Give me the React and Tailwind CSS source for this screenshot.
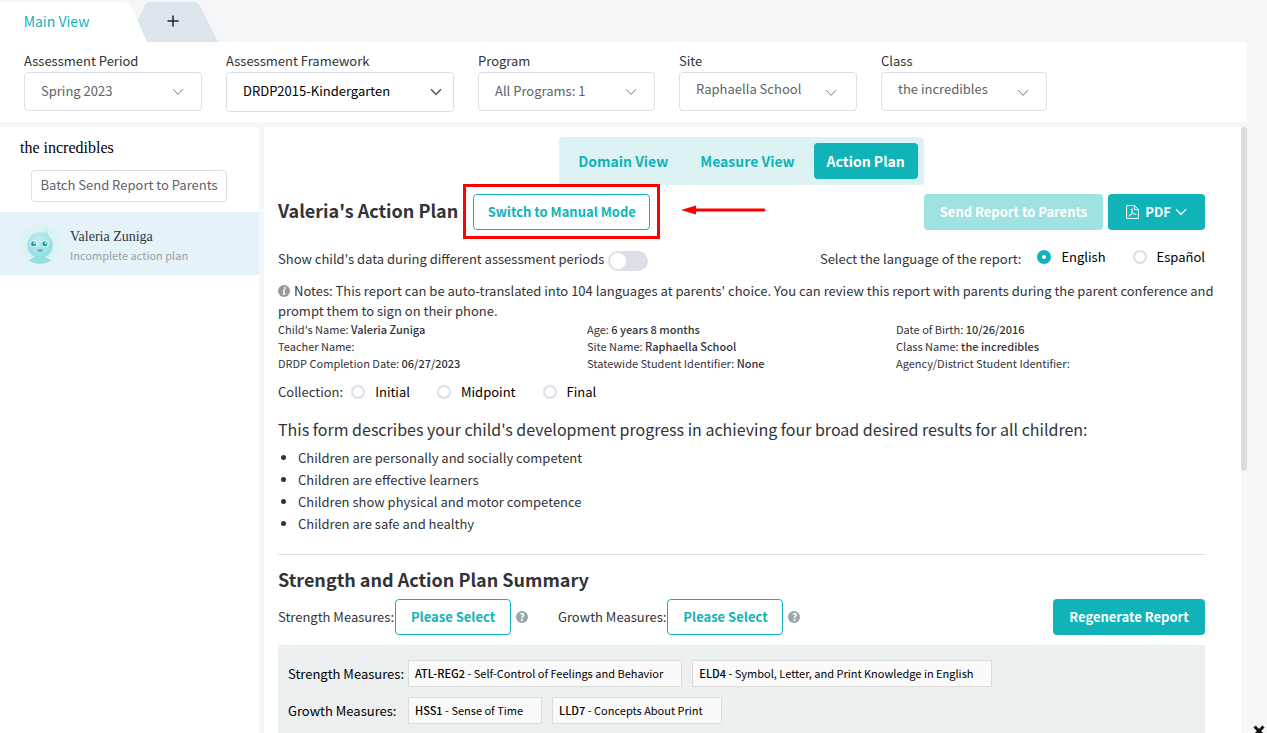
import React, { useState } from "react";

const measures = {
  strength: [
    { code: "ATL-REG2", name: "Self-Control of Feelings and Behavior" },
    { code: "ELD4", name: "Symbol, Letter, and Print Knowledge in English" },
  ],
  growth: [
    { code: "HSS1", name: "Sense of Time" },
    { code: "LLD7", name: "Concepts About Print" },
  ],
};

const childInfo = [
  ["Child's Name:", "Valeria Zuniga"],
  ["Age:", "6 years 8 months"],
  ["Date of Birth:", "10/26/2016"],
  ["Teacher Name:", ""],
  ["Site Name:", "Raphaella School"],
  ["Class Name:", "the incredibles"],
  ["DRDP Completion Date:", "06/27/2023"],
  ["Statewide Student Identifier:", "None"],
  ["Agency/District Student Identifier:", ""],
];

const results = [
  "Children are personally and socially competent",
  "Children are effective learners",
  "Children show physical and motor competence",
  "Children are safe and healthy",
];

function Chevron({ className, width = 1 }) {
  return (
    <svg viewBox="0 0 12 8" className={className} fill="none" stroke="currentColor" strokeWidth={width} aria-hidden="true">
      <path d="M1 1.2 6 6.4 11 1.2" />
    </svg>
  );
}

function Filter({ id, label, value, wrap, field = "h-[39px] text-[#606266] pb-0.5", icon = "text-[#6f7785] right-[18px] top-4", stroke }) {
  return (
    <div className={wrap}>
      <label htmlFor={id} className="mb-px block leading-5 text-[#323338]">{label}</label>
      <div className="relative">
        <select id={id} className={`w-full appearance-none rounded border border-[#dcdfe6] bg-white pl-4 pr-10 leading-5 ${field}`}>
          <option>{value}</option>
        </select>
        <Chevron width={stroke} className={`pointer-events-none absolute h-2 w-3 ${icon}`} />
      </div>
    </div>
  );
}

function Radio({ name, label, checked, onChange }) {
  return (
    <label className="flex items-center gap-2.5 text-black">
      <input
        type="radio"
        name={name}
        checked={checked}
        onChange={onChange}
        className="size-3.5 appearance-none rounded-full border-2 border-[#dcdfe6] bg-white checked:border-5 checked:border-[#10b3b7]"
      />
      {label}
    </label>
  );
}

function Help() {
  return (
    <button type="button" aria-label="Help" className="flex size-3 items-center justify-center rounded-full bg-[#98a6ad] text-[10px] leading-3 font-bold text-white">
      ?
    </button>
  );
}

function InfoIcon() {
  return (
    <svg viewBox="0 0 12 12" className="mr-1 inline size-3 align-[-1px]" aria-hidden="true">
      <circle cx="6" cy="6" r="6" fill="#999" />
      <circle cx="6.900" cy="3" r="1" fill="#fff" />
      <path d="M4.800 5.200H6.500L5.500 9H7.200" stroke="#fff" strokeWidth="1.300" fill="none" />
    </svg>
  );
}

function Avatar() {
  return (
    <svg viewBox="0 0 40 40" className="size-10 shrink-0" aria-hidden="true">
      <defs>
        <radialGradient id="face" cx="45%" cy="35%" r="65%">
          <stop offset="0" stopColor="#c4eff0" />
          <stop offset="1" stopColor="#8fdcdf" />
        </radialGradient>
      </defs>
      <circle cx="20" cy="20" r="20" fill="#dcf3f4" />
      <path d="M9 36.8Q12 32.5 20 32.5T31 36.8Q26 40 20 40T9 36.8Z" fill="#93dfe1" />
      <path d="M23 9.5Q27.2 9 25.8 4.8Q28.6 8.500 26.500 11Z" fill="#a5e3e5" />
      <circle cx="20" cy="21" r="12.800" fill="url(#face)" />
      <circle cx="14" cy="19.500" r="3.400" fill="#e2fafa" />
      <circle cx="25.500" cy="19.500" r="3.400" fill="#e2fafa" />
      <circle cx="13.600" cy="19.800" r="2.500" fill="#12a5ad" />
      <circle cx="24.900" cy="19.800" r="2.500" fill="#12a5ad" />
      <circle cx="14.500" cy="19" r="0.900" fill="#fff" />
      <circle cx="25.800" cy="19" r="0.900" fill="#fff" />
      <path d="M17 25.200H23Q22.500 28 20 28T17 25.200Z" fill="#4fbcc2" />
    </svg>
  );
}

function PdfIcon() {
  return (
    <svg viewBox="0 0 13 14" className="h-3.5 w-[13px]" fill="none" stroke="currentColor" aria-hidden="true">
      <path d="M.6.6H8.600L12.400 4.400V13.400H.6Z" />
      <path d="M8.500.8V4.500H12.200" />
      <path strokeWidth=".8" d="M6 3.600C6.900 3.600 6.400 6.100 5.800 7.600 5 9.600 3.600 11.500 2.900 11.200 2.300 10.700 4.500 9.300 6.500 8.900 8.500 8.500 10.300 8.800 10.100 9.500 9.700 10.300 7.200 8.800 6.200 6.800 5.600 5.400 5.300 3.600 6 3.600Z" />
    </svg>
  );
}

function MeasureRow({ label, items }) {
  return (
    <div className="flex items-center gap-2.5">
      <span className="w-[110px] whitespace-nowrap text-black">{label}</span>
      {items.map((m) => (
        <div key={m.code} className="h-[27px] border border-[#dcdcdc] bg-[#fafafa] pr-[18px] pl-1.5 text-[11px] leading-6 text-black">
          <b className="font-medium">{m.code}</b> - {m.name}
        </div>
      ))}
    </div>
  );
}

export default function App() {
  const [view, setView] = useState("Action Plan");
  const [language, setLanguage] = useState("English");
  const [collection, setCollection] = useState("");
  const [compare, setCompare] = useState(false);

  return (
    <div className="relative flex h-screen flex-col overflow-hidden bg-[#f5f6f8] pr-5 font-['Noto_Sans_CJK_SC',sans-serif] text-[13px] leading-5 text-[#323338]">
      <nav className="flex h-[42px] shrink-0 pt-0.5">
        <button type="button" className="relative z-10 h-10 w-[147px] pr-[34px] pb-0.5 text-[14px] text-[#10b3b7]">
          <svg viewBox="0 0 147 40" className="absolute inset-0 -z-10 h-10 w-[147px]" aria-hidden="true">
            <path d="M0 0H125Q129 0 131 4L147 40H0Z" fill="#fff" />
          </svg>
          Main View
        </button>
        <button type="button" aria-label="Add view" className="relative -ml-2.5 flex h-10 w-[81px] justify-center pt-3 pr-2.5">
          <svg viewBox="0 0 81 40" className="absolute inset-0 h-10 w-[81px]" aria-hidden="true">
            <path d="M0 20 8 3Q9.500 0 13 0H57Q61 0 63 4L81 40H10Z" fill="#dce6ea" />
          </svg>
          <svg viewBox="0 0 12 12" className="relative mt-px size-3" stroke="#222" strokeWidth="1.500" aria-hidden="true">
            <path d="M6 .5V11.500M.5 6H11.500" />
          </svg>
        </button>
      </nav>

      <header className="flex h-20 shrink-0 gap-6 bg-white pt-[9px] pl-6">
        <Filter id="period" label="Assessment Period" value="Spring 2023" wrap="w-[178px]" />
        <Filter
          id="framework"
          label="Assessment Framework"
          value="DRDP2015-Kindergarten"
          wrap="w-[228px]"
          field="h-10 text-black pb-0.5"
          icon="text-[#4d5563] right-3 top-4"
          stroke={1.5}
        />
        <Filter id="program" label="Program" value="All Programs: 1" wrap="w-[177px]" />
        <Filter id="site" label="Site" value="Raphaella School" wrap="w-[178px]" field="h-[39px] text-[#606266] pb-1.5" icon="text-[#6f7785] right-5 top-[17px]" />
        <Filter id="class" label="Class" value="the incredibles" wrap="w-[166px]" field="h-[39px] text-[#606266] pb-1.5" icon="text-[#8a6a60] right-[18px] top-[17px]" />
      </header>

      <div className="mt-[5px] flex min-h-0 flex-1 gap-[5px]">
        <aside className="w-[259px] shrink-0 bg-white pt-[11px]">
          <h2 className="pl-5 font-['Liberation_Serif',serif] text-[16px] leading-5 text-black">the incredibles</h2>
          <button type="button" className="mt-3 ml-[31px] h-8 w-[196px] rounded border border-[#dcdfe6] pb-0.5 text-[#606266]">
            Batch Send Report to Parents
          </button>
          <a href="#valeria" className="mt-2.5 flex h-[63px] items-center gap-2.5 bg-[#e5f2f8] pl-5">
            <Avatar />
            <span className="pt-[3px]">
              <span className="block font-['Liberation_Serif',serif] text-[14px] text-[#323338]">Valeria Zuniga</span>
              <span className="block text-[11px] leading-4 text-[#a0a0a0]">Incomplete action plan</span>
            </span>
          </a>
        </aside>

        <main className="flex min-w-0 flex-1 bg-white">
          <div className="min-w-0 flex-1 overflow-hidden pt-2.5 pr-9 pl-3.5">
            <div className="flex justify-center">
              <div className="flex gap-1.5 rounded bg-[#dcf2f3] p-1.5">
                {["Domain View", "Measure View", "Action Plan"].map((tab) => (
                  <button
                    key={tab}
                    type="button"
                    onClick={() => setView(tab)}
                    className={`h-9 rounded px-[13px] text-[14px] font-bold ${view === tab ? "bg-[#10b3b7] text-white" : "text-[#10b3b7]"}`}
                  >
                    {tab}
                  </button>
                ))}
              </div>
            </div>

            <div className="mt-[9px] flex items-center">
              <h1 className="pb-1 text-[18px] leading-6 font-bold whitespace-nowrap">Valeria's Action Plan</h1>
              <div className="relative ml-[15px]">
                <button type="button" className="block h-9 w-[177px] rounded border border-[#10b3b7] font-bold text-[#10b3b7]">
                  Switch to Manual Mode
                </button>
                <div className="pointer-events-none absolute -inset-x-2.5 -top-2.5 -bottom-[9px] border-3 border-[#f00]" />
                <svg viewBox="0 0 85 10" className="absolute top-[11px] left-[208px] h-2.5 w-[85px]" aria-hidden="true">
                  <path d="M0 5 15 .5V9.500Z" fill="#f00" />
                  <path d="M14 5H83" stroke="#f00" strokeWidth="3" strokeLinecap="round" />
                </svg>
              </div>
              <div className="ml-auto flex gap-[5px] font-bold text-white">
                <button type="button" disabled className="h-9 w-[179px] rounded bg-[#a0e1e2]">Send Report to Parents</button>
                <button type="button" className="flex h-9 w-[97px] items-center justify-center gap-1.5 rounded bg-[#10b3b7]">
                  <PdfIcon />
                  PDF
                  <Chevron className="-ml-0.5 h-2 w-3" width={1.3} />
                </button>
              </div>
            </div>

            <div className="mt-[17px] flex h-7 items-start justify-between">
              <label className="flex gap-1 leading-6">
                Show child's data during different assessment periods
                <input
                  type="checkbox"
                  role="switch"
                  checked={compare}
                  onChange={() => setCompare(!compare)}
                  className="mt-1 h-5 w-10 appearance-none rounded-full bg-[#dcdfe6] before:mt-0.5 before:ml-0.5 before:block before:size-4 before:rounded-full before:bg-white checked:bg-[#10b3b7] checked:before:ml-[22px]"
                />
              </label>
              <div className="flex items-start">
                <span className="mr-4 leading-6">Select the language of the report:</span>
                <div className="flex gap-[27px]">
                  {["English", "Español"].map((l) => (
                    <Radio key={l} name="language" label={l} checked={language === l} onChange={() => setLanguage(l)} />
                  ))}
                </div>
              </div>
            </div>

            <p className="mt-1.5 -mr-4">
              <InfoIcon />
              Notes: This report can be auto-translated into 104 languages at parents' choice. You can review this report with parents during the parent conference and prompt them to sign on their phone.
            </p>

            <div className="grid grid-cols-3 text-[11px] leading-[17px]">
              {childInfo.map(([label, value]) => (
                <div key={label}>
                  {label} <b className="font-medium">{value}</b>
                </div>
              ))}
            </div>

            <fieldset className="mt-2.5 flex h-5 items-center">
              <span className="mr-2">Collection:</span>
              <div className="flex gap-[27px]">
                {["Initial", "Midpoint", "Final"].map((c) => (
                  <Radio key={c} name="collection" label={c} checked={collection === c} onChange={() => setCollection(c)} />
                ))}
              </div>
            </fieldset>

            <h3 className="mt-[15px] text-[16px] leading-6">This form describes your child's development progress in achieving four broad desired results for all children:</h3>
            <ul className="mt-1.5 list-disc pl-5 leading-[22px]">
              {results.map((r) => (
                <li key={r}>{r}</li>
              ))}
            </ul>

            <hr className="mt-[19px] border-[#dcdfe6]" />
            <h2 className="mt-3 text-[18px] leading-6 font-bold">Strength and Action Plan Summary</h2>

            <div className="mt-2 flex items-center">
              <span className="mr-px">Strength Measures:</span>
              <button type="button" className="mr-[5px] h-9 w-[116px] rounded border border-[#10b3b7] font-bold text-[#10b3b7]">Please Select</button>
              <Help />
              <span className="mr-px ml-[30px]">Growth Measures:</span>
              <button type="button" className="mr-[5px] h-9 w-[116px] rounded border border-[#10b3b7] font-bold text-[#10b3b7]">Please Select</button>
              <Help />
              <button type="button" className="ml-auto h-9 w-[152px] rounded bg-[#10b3b7] font-bold text-white">Regenerate Report</button>
            </div>

            <section className="mt-2.5 flex flex-col gap-2.5 bg-[#ecf0f1] px-2.5 py-[15px]">
              <MeasureRow label="Strength Measures:" items={measures.strength} />
              <MeasureRow label="Growth Measures:" items={measures.growth} />
            </section>
          </div>
          <div className="w-1.5 shrink-0 bg-[#f8f8f9]">
            <div className="h-[344px] rounded-full bg-[#dcdddf]" />
          </div>
        </main>
      </div>

      <button type="button" aria-label="Close" className="absolute right-0.5 -bottom-1">
        <svg viewBox="0 0 12 12" className="size-3" stroke="#111" strokeWidth="3" aria-hidden="true">
          <path d="M1.500 1.500 10.500 10.500M10.500 1.500 1.500 10.500" />
        </svg>
      </button>
    </div>
  );
}
